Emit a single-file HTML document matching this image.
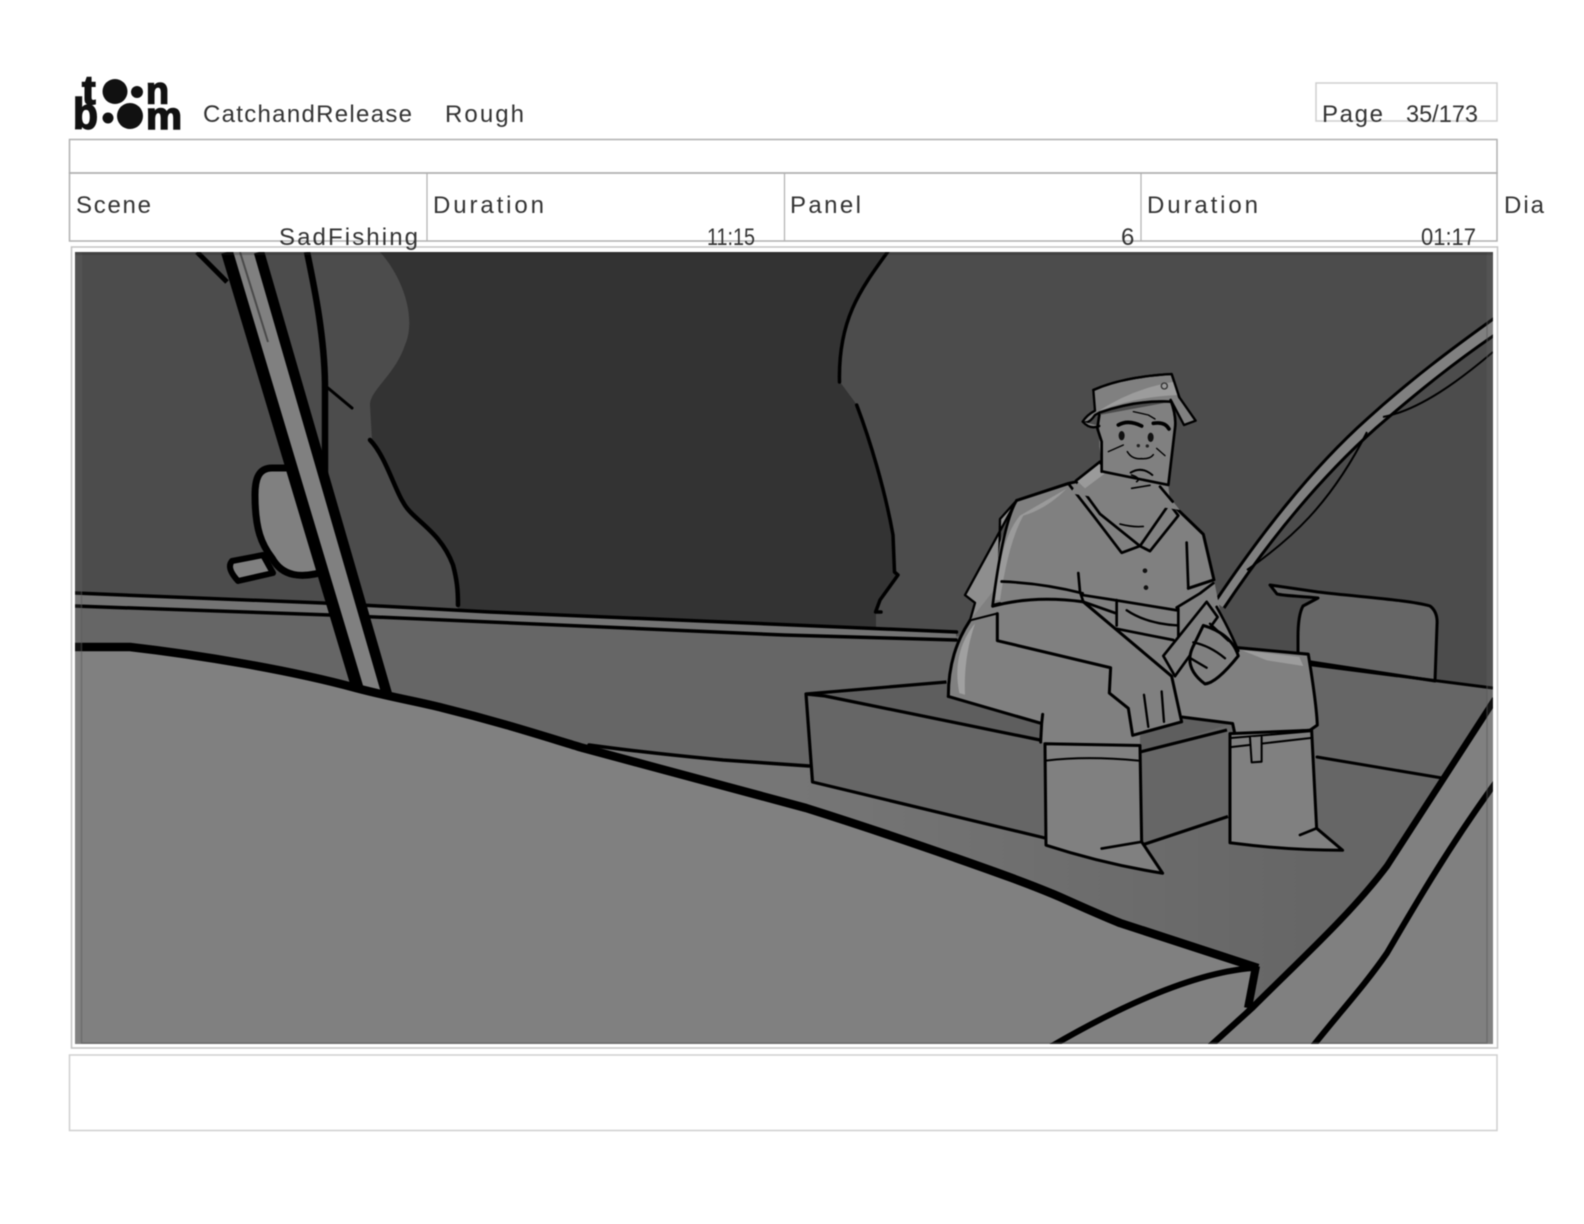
<!DOCTYPE html>
<html><head><meta charset="utf-8"><title>Storyboard</title>
<style>html,body{margin:0;padding:0;background:#fff;width:1584px;height:1224px;overflow:hidden}svg{display:block;filter:blur(.45px)}
text{font-family:"Liberation Sans",sans-serif;fill:#333;font-size:24px}</style></head>
<body>
<svg xmlns="http://www.w3.org/2000/svg" width="1584" height="1224" viewBox="0 0 1584 1224">
<defs>
<linearGradient id="fl" x1="800" y1="0" x2="1320" y2="0" gradientUnits="userSpaceOnUse"><stop offset="0" stop-color="#767676"/><stop offset="1" stop-color="#666"/></linearGradient>
<clipPath id="im"><rect x="75" y="252" width="1418" height="792"/></clipPath>
</defs>
<rect width="1584" height="1224" fill="#fff"/>

<!-- frames -->
<g fill="none" stroke="#b0b0b0" stroke-width="1.5">
<rect x="1316" y="83" width="181" height="38" stroke="#cfcfcf"/>
<rect x="69.5" y="139.5" width="1427.5" height="33.5"/>
<rect x="69.5" y="173" width="1427.5" height="68"/>
<path d="M427 173V241M784.5 173V241M1141 173V241" stroke-width="1.2"/>
<rect x="71.5" y="247" width="1426" height="801" stroke="#c4c4c4"/>
<rect x="69.5" y="1055" width="1427.5" height="75.5" stroke="#cfcfcf"/>
</g>

<!-- logo -->
<g>
<text x="82" y="104" style="font-size:41px;font-weight:700;fill:#111" stroke="#111" stroke-width="1.5">t</text>
<circle cx="115" cy="91.500" r="12.500" fill="#111"/><circle cx="137" cy="92" r="6" fill="#111"/>
<text x="146" y="103.500" style="font-size:38px;font-weight:700;fill:#111" stroke="#111" stroke-width="1.5" textLength="23" lengthAdjust="spacingAndGlyphs">n</text>
<text x="73" y="128.500" style="font-size:44px;font-weight:700;fill:#111" stroke="#111" stroke-width="1.5" textLength="25" lengthAdjust="spacingAndGlyphs">b</text>
<circle cx="108" cy="118" r="5.500" fill="#111"/><circle cx="130" cy="116" r="13" fill="#111"/>
<text x="146" y="129" style="font-size:38px;font-weight:700;fill:#111" stroke="#111" stroke-width="1.5" textLength="36" lengthAdjust="spacingAndGlyphs">m</text>
</g>

<!-- header text -->
<text x="203" y="122" textLength="209" lengthAdjust="spacing">CatchandRelease</text>
<text x="445" y="122" textLength="79" lengthAdjust="spacing">Rough</text>
<text x="1322" y="122" textLength="61" lengthAdjust="spacing">Page</text>
<text x="1406" y="122" textLength="72" lengthAdjust="spacingAndGlyphs">35/173</text>
<text x="76" y="213" textLength="75" lengthAdjust="spacing">Scene</text>
<text x="433" y="213" textLength="111" lengthAdjust="spacing">Duration</text>
<text x="790" y="213" textLength="71" lengthAdjust="spacing">Panel</text>
<text x="1147" y="213" textLength="111" lengthAdjust="spacing">Duration</text>
<text x="1504" y="213" textLength="40" lengthAdjust="spacing">Dia</text>
<text x="279" y="245" textLength="139" lengthAdjust="spacing">SadFishing</text>
<text x="707" y="245" textLength="48" lengthAdjust="spacingAndGlyphs">11:15</text>
<text x="1121" y="245" textLength="14" lengthAdjust="spacing">6</text>
<text x="1421" y="245" textLength="55" lengthAdjust="spacingAndGlyphs">01:17</text>

<!-- panel image -->
<g clip-path="url(#im)">
<rect x="75" y="252" width="1418" height="792" fill="#4c4c4c"/>
<!-- dark centre -->
<path d="M380 252C405 280 416 320 405 345C395 375 370 390 370 405L372 440C385 455 395 490 403 502C412 520 440 530 453 565C457 580 458 590 458 612L876 632L876 612L880 600L898 575L894 572L893 535C885 490 870 440 857 405L840 382C838 320 860 290 888 252Z" fill="#333"/>
<!-- wall -->
<path d="M75 600L490 620L956 636L1000 640L1313 665L1493 688V1044H75Z" fill="#666"/>
<!-- strip between lines -->
<path d="M74 593L323 603L490 612L956 632L956 640L784 635L490 622L330 615L74 606Z" fill="#747474"/>
<g fill="none" stroke="#000" stroke-linecap="round">
<path d="M74 593L323 603L490 612L956.500 632" stroke-width="3.500"/>
<path d="M74 606L330 615L490 622L784 635L956 640" stroke-width="3.500"/>
</g>
<!-- floor -->
<path d="M589 745L723 760L809 766L1317 757L1442 778L1300 980L1210 1044H1000L583 748Z" fill="url(#fl)"/>
<path d="M1495 699L1387 866C1350 915 1300 960 1253 1007L1210 1044L1493 1044Z" fill="#808080"/>
<!-- dark scene lines -->
<g fill="none" stroke="#000" stroke-linecap="round" stroke-linejoin="round">
<path d="M887.600 252C860 290 838 320 839.500 382" stroke-width="3.500"/>
<path d="M856.700 405C870 440 885 490 893 535L894.500 572L898 575L880 600L875.600 612H881" stroke-width="3.500"/>
<path d="M370 440C385 455 395 490 403 502C412 520 440 530 453 565C457 580 458 590 458 605" stroke-width="4.500"/>
<path d="M589 745C640 752 680 756 723 760L809 766" stroke-width="3.500"/>
<path d="M1317 757L1442 778" stroke-width="3"/>
</g>
<!-- seat back -->
<path d="M1270 585L1318 592C1360 597 1410 600 1430 606Q1438 612 1437 625L1435 681L1298 660V637Q1298 615 1303 606L1318 598C1300 596 1285 596 1277 594Z" fill="#666" stroke="#000" stroke-width="3" stroke-linejoin="round"/>
<path d="M1300 663L1313 665L1493 688" stroke="#000" stroke-width="3" fill="none"/>
<!-- mirror -->
<path d="M263 555L232 561Q226 568 238 581L273 573Z" fill="#808080" stroke="#000" stroke-width="6" stroke-linejoin="round"/>
<path d="M290 468H272C258 468 255 480 255 495C255 530 262 545 272 558C282 576 300 580 330 570Z" fill="#808080" stroke="#000" stroke-width="7" stroke-linejoin="round"/>
<!-- pillar -->
<path d="M307 252C315 290 325 340 325 388V490" fill="none" stroke="#000" stroke-width="6.500"/>
<path d="M328 388L352 408" fill="none" stroke="#000" stroke-width="3" stroke-linecap="round"/>
<path d="M197 252L227 282" fill="none" stroke="#000" stroke-width="5"/>
<path d="M227 252H259L388 698L359 693Z" fill="#808080"/>
<path d="M227 252L359 693" fill="none" stroke="#000" stroke-width="12"/>
<path d="M259 252L388 698" fill="none" stroke="#000" stroke-width="10.500"/>
<path d="M240 252L268 342" fill="none" stroke="#4a4a4a" stroke-width="2"/>
<!-- gunwale lines -->
<g fill="none" stroke="#000">
<path d="M1495 699L1387 866C1350 915 1300 960 1253 1007L1210 1046" stroke-width="6.500"/>
<path d="M1496 782C1450 845 1415 905 1387 953C1365 985 1340 1012 1313 1046" stroke-width="6"/>
</g>
<!-- bow -->
<path d="M70 647H130C200 655 290 670 356 688C390 697 420 702 443 708C500 722 540 735 583 748L806 808C860 825 910 842 953 857C990 870 1030 884 1060 897C1080 906 1100 915 1120 923L1253 967L1248 1007L1210 1050H70Z" fill="#808080"/>
<path d="M1253 968C1200 972 1130 1000 1045 1050" fill="none" stroke="#000" stroke-width="6"/>
<path d="M1256 966L1248 1008" fill="none" stroke="#000" stroke-width="8"/>
<path d="M1253 1007L1210 1046" fill="none" stroke="#000" stroke-width="6"/>
<path d="M72 647H130C200 655 290 670 356 688C390 697 420 702 443 708C500 722 540 735 583 748L806 808C860 825 910 842 953 857C990 870 1030 884 1060 897C1080 906 1100 915 1120 923L1258 968" fill="none" stroke="#000" stroke-width="8.500" stroke-linejoin="round"/>
<!-- rod -->
<path d="M1215 602C1260 535 1310 470 1367 419C1410 380 1450 350 1496 317V334C1455 362 1420 390 1376 428C1320 478 1268 542 1224 608Z" fill="#808080"/>
<g fill="none" stroke="#000" stroke-linejoin="round">
<path d="M1215 602C1260 535 1310 470 1367 419C1410 380 1450 350 1496 317" stroke-width="3"/>
<path d="M1224 608C1268 542 1320 478 1376 428C1420 390 1455 362 1496 334" stroke-width="3"/>
<path d="M1247 570C1290 540 1330 505 1367 432" stroke-width="2"/>
<path d="M1383 417C1420 410 1460 380 1493 352" stroke-width="2"/>
</g>
</g>

<!-- bench -->
<path d="M806 694L946.500 682L1233 723L1228 816L1142 845L1045 838L812.500 782Z" fill="#666"/>
<path d="M825 695L946.500 682L1233 723L1140 752L1042 742Z" fill="#5e5e5e"/>
<g fill="none" stroke="#000" stroke-width="3.200" stroke-linejoin="round">
<path d="M946.500 682L806 694L812.500 782L1045 838"/>
<path d="M806 694L825 696L1040 740"/>
<path d="M1140 752L1227 730"/>
<path d="M1142 845L1228 816.500"/>
</g>

<!-- character -->
<g transform="translate(920 350) scale(.3333 .338)" stroke-linejoin="round" stroke-linecap="round">
<!-- far thigh -->
<path d="M945 880L1165 900Q1190 1050 1192 1110L1170 1125Q1050 1135 945 1137L938 1105L780 1085L770 980Z" fill="#808080" stroke="#000" stroke-width="9"/>
<path d="M965 888L1138 908L1150 935L1040 918Z" fill="#9c9c9c"/>
<!-- far boot -->
<path d="M930 1135L930 1458Q1100 1480 1268 1480L1190 1415L1175 1125Z" fill="#808080" stroke="#000" stroke-width="9"/>
<path d="M932 1175L1172 1148M932 1148L1172 1128" fill="none" stroke="#000" stroke-width="6"/>
<path d="M990 1145L995 1220L1025 1218L1025 1145" fill="#808080" stroke="#000" stroke-width="6"/>
<path d="M1140 1435L1190 1415" fill="none" stroke="#000" stroke-width="8"/>
<!-- far forearm -->
<path d="M770 770L805 705L882 680L900 770Q935 830 955 890L850 990L770 980Z" fill="#808080"/>
<path d="M890 760Q930 830 955 890" fill="none" stroke="#000" stroke-width="8"/>
<!-- back sleeve -->
<path d="M290 445L135 725L165 748L150 800L235 790L240 500Z" fill="#8e8e8e" stroke="#000" stroke-width="7"/>
<!-- main body -->
<path d="M85 1025C85 930 110 860 150 800L230 700L800 700L785 1100L660 1140L660 1168L365 1160L368 1105Z" fill="#808080"/>
<path d="M85 1025C85 930 110 860 150 800" fill="none" stroke="#000" stroke-width="9"/>
<path d="M150 800L230 780" fill="none" stroke="#000" stroke-width="6"/>
<path d="M118 1015Q95 900 160 815L165 810Q130 910 135 1020Z" fill="#a0a0a0"/>
<path d="M85 1025L365 1105L362 1160M368 1078L365 1105" fill="none" stroke="#000" stroke-width="9"/>
<!-- near boot -->
<path d="M375 1165L378 1465Q550 1520 728 1548L665 1455L660 1170Z" fill="#808080" stroke="#000" stroke-width="9"/>
<path d="M378 1215Q500 1200 655 1215" fill="none" stroke="#000" stroke-width="6"/>
<path d="M545 1475L665 1455" fill="none" stroke="#000" stroke-width="8"/>
<!-- shirt body -->
<path d="M290 445L445 395L470 390L545 330L745 400L750 450L850 545L880 680L805 705L770 770L720 905L490 745L340 735L218 755L240 570Z" fill="#808080"/>
<path d="M300 490Q240 560 225 740L240 740Q265 570 310 490Q380 470 440 410Z" fill="#9a9a9a"/>
<path d="M238 770L282 850L262 855L240 780Z" fill="#9a9a9a"/>
<path d="M480 385L545 345L555 360L500 410Z" fill="#999"/>
<path d="M290 445L445 395L470 390M470 390L545 330M750 450L850 545L882 680L805 705" fill="none" stroke="#000" stroke-width="9"/>
<path d="M290 445Q250 510 218 755L240 750" fill="none" stroke="#000" stroke-width="8"/>
<path d="M245 685Q370 690 488 720" fill="none" stroke="#000" stroke-width="8"/>
<path d="M475 660L480 715L490 745" fill="none" stroke="#000" stroke-width="8"/>
<path d="M800 570L805 705" fill="none" stroke="#000" stroke-width="8"/>
<!-- waistband, pouch -->
<path d="M488 725L585 740L770 770M490 745L585 778M590 740L590 815M775 765V860M590 825L760 858" fill="none" stroke="#000" stroke-width="8"/>
<path d="M620 770Q680 810 775 815" fill="none" stroke="#000" stroke-width="7"/>
<path d="M770 762L840 720L880 690" fill="none" stroke="#000" stroke-width="8"/>
<!-- collar -->
<path d="M445 395L470 390L540 485L660 580L605 600L520 490Z" fill="#808080" stroke="#000" stroke-width="8"/>
<path d="M660 580L690 595L775 490L748 455Z" fill="#808080" stroke="#000" stroke-width="8"/>
<path d="M600 515Q640 525 670 522" fill="none" stroke="#000" stroke-width="5"/>
<circle cx="675" cy="653" r="7" fill="#111"/><circle cx="678" cy="703" r="7" fill="#111"/>
<!-- rod handle -->
<path d="M860 745L730 905L765 965L893 790Z" fill="#808080" stroke="#000" stroke-width="8"/>
<!-- near arm / hand -->
<path d="M230 770L232 860L572 940L568 1015L625 1060L638 1140L785 1100L755 965L490 745Z" fill="#808080"/>
<path d="M232 780V860L572 940L568 1015L625 1060L638 1140L785 1100L755 965L490 745" fill="none" stroke="#000" stroke-width="9"/>
<path d="M218 758Q340 725 490 745" fill="none" stroke="#000" stroke-width="9"/>
<path d="M672 1020L685 1115M725 1010L732 1100" fill="none" stroke="#000" stroke-width="7"/>
<!-- far hand -->
<path d="M850 815L818 880Q790 940 855 988Q890 985 955 905Q935 840 850 815Z" fill="#808080" stroke="#000" stroke-width="9"/>
<path d="M820 865Q870 875 915 912M808 910L860 940M870 810L925 860" fill="none" stroke="#000" stroke-width="7"/>
</g>

<!-- head -->
<g transform="translate(1040 360) scale(.3333)" stroke-linejoin="round" stroke-linecap="round">
<path d="M120 360L175 310L190 335L280 370L335 380L360 378L420 450L90 400Z" fill="#808080"/>
<path d="M110 362L178 310L195 340L135 385Z" fill="#9a9a9a"/>
<path d="M108 362L180 305" fill="none" stroke="#000" stroke-width="8"/>
<path d="M178 165L395 125L405 205L385 375L190 335L178 260Z" fill="#808080"/>
<path d="M160 90Q250 50 395 42L418 112L467 182L432 195L395 125Q290 120 178 158L165 165Q145 195 128 185Q140 165 165 152Z" fill="#808080" stroke="#000" stroke-width="7"/>
<path d="M178 152Q280 85 405 65L415 105Q290 110 185 150Z" fill="#9c9c9c"/>
<path d="M160 90Q250 50 395 42L418 112" fill="none" stroke="#000" stroke-width="7"/>
<path d="M178 158Q290 118 395 125" fill="none" stroke="#000" stroke-width="7"/>
<circle cx="373" cy="78" r="9" fill="none" stroke="#333" stroke-width="4"/>
<path d="M128 185Q150 210 178 198" fill="#808080" stroke="#000" stroke-width="7"/>
<path d="M178 165L172 205L185 245L185 335M392 120Q410 170 405 205L385 375L190 335" fill="none" stroke="#000" stroke-width="8"/>
<path d="M235 195Q265 178 305 198M340 190Q375 184 387 207" fill="none" stroke="#000" stroke-width="11"/>
<path d="M280 155L325 165L345 177" fill="none" stroke="#000" stroke-width="4"/>
<ellipse cx="245" cy="227" rx="9" ry="14" fill="#111"/><ellipse cx="332" cy="232" rx="9" ry="14" fill="#111"/>
<path d="M262 275Q275 298 303 296Q330 298 340 284" fill="none" stroke="#000" stroke-width="4.500"/>
<circle cx="295" cy="257" r="5" fill="#222"/><circle cx="322" cy="258" r="5" fill="#222"/>
<path d="M205 275L250 255M350 265L375 287" fill="none" stroke="#000" stroke-width="4"/>
<path d="M272 338Q305 318 337 345" fill="none" stroke="#000" stroke-width="6"/>
<path d="M275 345Q305 355 290 365M275 385L330 376" fill="none" stroke="#000" stroke-width="5"/>
<path d="M360 380L398 425" fill="none" stroke="#000" stroke-width="8"/>
</g>

<!-- image inner edge -->
<g fill="#8a8a8a" fill-opacity=".12">
<rect x="75" y="252" width="7" height="792"/>
<rect x="1487" y="252" width="6" height="792"/>
</g>
<path d="M81.500 254V1043H1487V254" fill="none" stroke="#555" stroke-opacity=".45" stroke-width="1.500"/>
<rect x="75" y="252" width="1418" height="3" fill="#222" fill-opacity=".25"/>
</svg>
</body></html>
